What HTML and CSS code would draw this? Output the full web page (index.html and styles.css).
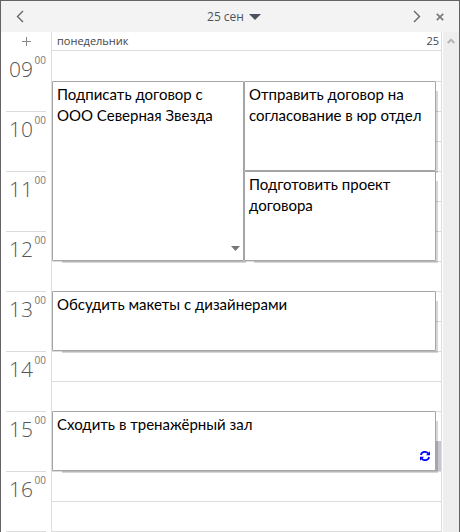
FILE: index.html
```html
<!DOCTYPE html>
<html lang="ru">
<head>
    <meta charset="UTF-8">
    <meta name="viewport" content="width=device-width, initial-scale=1.0">
    <title>Календарь - 25 сен</title>
    <link rel="stylesheet" href="styles.css">
</head>
<body>

    <div class="calendar">
        <header class="toolbar">
            <button class="nav-button prev" type="button" aria-label="Предыдущий день">
                <svg width="8" height="13" viewBox="0 0 8 13"><path d="M7 1 L1.5 6.5 L7 12"/></svg>
            </button>
            <button class="date-button" type="button">
                25 сен
                <svg width="12" height="6" viewBox="0 0 12 6"><path d="M0 0 H12 L6 6 Z"/></svg>
            </button>
            <button class="nav-button next" type="button" aria-label="Следующий день">
                <svg width="8" height="13" viewBox="0 0 8 13"><path d="M1 1 L6.5 6.5 L1 12"/></svg>
            </button>
            <button class="nav-button close" type="button" aria-label="Закрыть">
                <svg width="8" height="8" viewBox="0 0 8 8"><path d="M0.8 0.8 L7.2 7.2 M7.2 0.8 L0.8 7.2"/></svg>
            </button>
        </header>

        <main class="content">
            <div class="times">
                <button class="add-button" type="button" aria-label="Добавить">
                    <svg width="9" height="9" viewBox="0 0 9 9"><path d="M4.5 0 V9 M0 4.5 H9"/></svg>
                </button>
                <ol class="hours">
                    <li>09<sup>00</sup></li>
                    <li>10<sup>00</sup></li>
                    <li>11<sup>00</sup></li>
                    <li>12<sup>00</sup></li>
                    <li>13<sup>00</sup></li>
                    <li>14<sup>00</sup></li>
                    <li>15<sup>00</sup></li>
                    <li>16<sup>00</sup></li>
                    <li></li>
                </ol>
            </div>

            <section class="day">
                <div class="day-header">
                    <span>понедельник</span>
                    <span>25</span>
                </div>

                <div class="day-body">
                    <!-- Ячейки по полчаса -->
                    <div class="slots">
                        <div class="slot"></div>
                        <div class="slot"></div>
                        <div class="slot"></div>
                        <div class="slot"></div>
                        <div class="slot"></div>
                        <div class="slot"></div>
                        <div class="slot"></div>
                        <div class="slot"></div>
                        <div class="slot"></div>
                        <div class="slot"></div>
                        <div class="slot"></div>
                        <div class="slot"></div>
                        <div class="slot"></div>
                        <div class="slot selected"></div>
                        <div class="slot"></div>
                        <div class="slot"></div>
                        <div class="slot"></div>
                    </div>

                    <!-- События -->
                    <article class="event contract">
                        <p>Подписать договор с ООО Северная Звезда</p>
                        <button class="more" type="button" aria-label="Показать ещё">
                            <svg width="9" height="5" viewBox="0 0 9 5"><path d="M0 0 H9 L4.5 5 Z"/></svg>
                        </button>
                    </article>
                    <article class="event approval">
                        <p>Отправить договор на согласование в юр отдел</p>
                    </article>
                    <article class="event draft">
                        <p>Подготовить проект договора</p>
                    </article>
                    <article class="event design">
                        <p>Обсудить макеты с дизайнерами</p>
                    </article>
                    <article class="event gym">
                        <p>Сходить в тренажёрный зал</p>
                        <svg class="repeat" width="10" height="10" viewBox="0 0 10 10">
                            <path class="arc" d="M0.9 4 C1.6 0.4 6.3 -0.2 8.3 2.6 M9.1 6 C8.4 9.6 3.7 10.2 1.7 7.4"/>
                            <path d="M10 0.2 V4.2 H6 Z M0 9.8 V5.8 H4 Z"/>
                        </svg>
                    </article>
                </div>
            </section>

            <div class="scrollbar">
                <button type="button" aria-label="Прокрутить вверх">
                    <svg width="8" height="6" viewBox="0 0 8 6"><path d="M0.7 5 L4 1.7 L7.3 5"/></svg>
                </button>
            </div>
        </main>
    </div>

</body>
</html>
```
FILE: styles.css
```css
:root {
    --frame-color: #646265;
    --panel-bg: #f3f3f3;
    --line-color: #dcdcdc;
    --event-border: #a5a5a5;
    --muted-color: #777;
    --slot-height: 30px;
}

* {
    margin: 0;
    padding: 0;
    box-sizing: border-box;
}

body {
    font-family: "Open Sans", "Noto Sans", sans-serif;
    background-color: white;
    overflow: hidden;
}

button {
    display: flex;
    align-items: center;
    justify-content: center;
    background: none;
    border: none;
    font-family: inherit;
    cursor: pointer;
}

.calendar {
    display: flex;
    flex-direction: column;
    height: 100vh;
    border: 1px solid var(--frame-color);
    border-bottom: none;
}

/* Верхняя панель */
.toolbar {
    display: grid;
    grid-template-columns: 38px 1fr 32px 14px;
    flex-shrink: 0;
    height: 31px;
    padding-right: 12px;
    background-color: var(--panel-bg);
}

.nav-button svg {
    fill: none;
    stroke: #666;
    stroke-width: 1.4;
}

.nav-button.close svg {
    stroke: #7a7a7a;
    stroke-width: 1.7;
}

.date-button {
    gap: 5px;
    padding-left: 28px;
    font-size: 12px;
    color: #4d535e;
}

.date-button svg {
    fill: #4d535e;
}

.content {
    display: flex;
    flex: 1;
    min-height: 0;
    overflow: hidden;
}

/* Шкала времени */
.times {
    width: 50px;
    padding: 0 5px;
}

.add-button {
    width: 100%;
    height: 19px;
}

.add-button svg {
    stroke: #888;
    stroke-width: 1;
}

.hours {
    list-style: none;
}

.hours li {
    display: flex;
    justify-content: space-between;
    height: calc(var(--slot-height) * 2);
    padding-left: 3px;
    border-top: 1px solid var(--line-color);
    font-size: 21px;
    font-weight: 300;
    line-height: 35px;
    color: #555;
}

.hours li:first-child {
    border-top-color: transparent;
}

.hours sup {
    font-size: 10px;
    font-weight: 400;
    line-height: 16px;
    color: var(--muted-color);
}

/* День */
.day {
    flex: 1;
    border-left: 1px solid var(--line-color);
    border-right: 1px solid var(--line-color);
}

.day-header {
    display: flex;
    justify-content: space-between;
    height: 19px;
    padding: 0 2px 0 5px;
    border-bottom: 1px solid var(--line-color);
    font-size: 11px;
    line-height: 18px;
    color: #444;
}

.day-body {
    display: grid;
    grid-template-columns: 1fr 1fr 5px;
    grid-template-rows: repeat(17, var(--slot-height));
}

.slots {
    grid-area: 1 / 1 / -1 / -1;
}

.slot {
    height: var(--slot-height);
    border-top: 1px solid var(--line-color);
}

.slot:first-child {
    border-top: none;
}

.slot.selected {
    background-color: #c9c6cf;
    border-top-color: #c9c6cf;
}

.event {
    position: relative;
    padding: 2px 4px;
    background-color: white;
    border: 1px solid var(--event-border);
    border-radius: 1px;
    box-shadow: 6px 6px 0 -4px rgba(0, 0, 0, 0.16);
    font-family: Lato, "Open Sans", sans-serif;
    font-size: 15px;
    line-height: 21px;
    color: black;
}

.contract {
    grid-area: 2 / 1 / 8 / 2;
}

.approval {
    grid-area: 2 / 2 / 5 / 3;
}

.draft {
    grid-area: 5 / 2 / 8 / 3;
}

.design {
    grid-area: 9 / 1 / 11 / 3;
}

.gym {
    grid-area: 13 / 1 / 15 / 3;
}

.more {
    position: absolute;
    right: 3px;
    bottom: 9px;
}

.more svg {
    fill: var(--muted-color);
}

.repeat {
    position: absolute;
    right: 5px;
    bottom: 9px;
    fill: blue;
}

.repeat .arc {
    fill: none;
    stroke: blue;
    stroke-width: 1.7;
}

/* Полоса прокрутки */
.scrollbar {
    width: 17px;
    border-left: 1px solid white;
    background-color: #eee;
}

.scrollbar button {
    width: 100%;
    height: 18px;
}

.scrollbar svg {
    fill: none;
    stroke: #b5b5b5;
    stroke-width: 2;
}
```
